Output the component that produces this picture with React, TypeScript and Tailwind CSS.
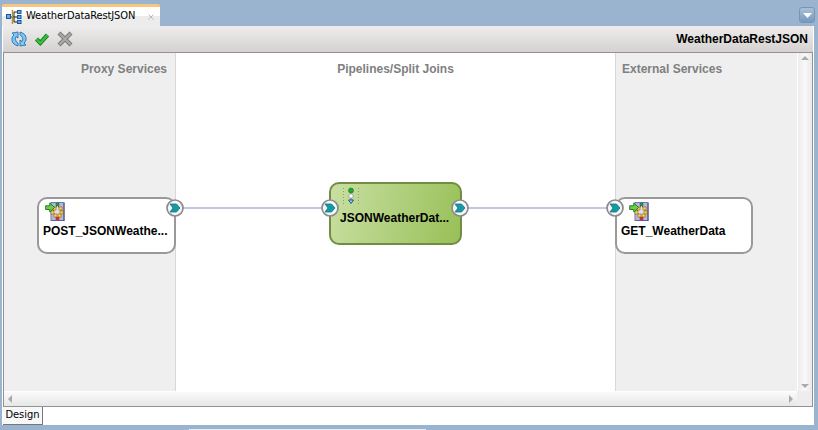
import React from "react";

function Port({ className }: { className: string }) {
  return (
    <svg className={`absolute size-[18px] ${className}`} viewBox="0 0 18 18">
      <circle cx="9" cy="9" r="8" fill="#f6f8f8" stroke="#8b8b8b" strokeWidth="1.7" />
      <path d="M4 5H10.5L14 9L10.5 13H4L7 9Z" fill="#159aa5" stroke="#17757f" strokeWidth="0.8" />
    </svg>
  );
}

function ServiceIcon() {
  return (
    <svg className="block h-5 w-5" viewBox="0 0 20 20">
      <rect x="6" y="1.5" width="13" height="18" fill="#b7b7de" stroke="#7777ad" />
      <path d="M19 2V20H6" fill="none" stroke="#4a4a78" strokeWidth="1" />
      <path d="M12.5 4L7.5 11L12.5 17L17 11Z" fill="#ddddf3" stroke="#6b4a3a" strokeWidth="1" />
      <rect x="11" y="2" width="3" height="2.5" fill="#21a052" stroke="#12713a" strokeWidth=".6" />
      <rect x="11" y="16" width="3" height="2.5" fill="#d5333e" stroke="#a2152a" strokeWidth=".6" />
      <g fill="#ffdb52" stroke="#9b7418" strokeWidth=".7">
        <rect x="8" y="6" width="3" height="3" /><rect x="14" y="6" width="3" height="3" />
        <rect x="6" y="10" width="3" height="3" /><rect x="15" y="10" width="3" height="3" />
        <rect x="9" y="13" width="3" height="3" /><rect x="13" y="13" width="3" height="3" />
      </g>
      <path d="M.7 4.8H4.8V2L9.6 6.5L4.8 11V8.5H.7Z" fill="#6ccf4b" stroke="#247e24" />
    </svg>
  );
}

function TabIcon() {
  return (
    <svg className="h-4 w-4 shrink-0" viewBox="0 0 16 16">
      <path d="M4 8H13M8 3H12M8 13H12M8 3V13" stroke="#222" strokeWidth="1" fill="none" />
      <path d="M6.5 1V15" stroke="#b19225" strokeWidth="1.5" />
      <g fill="#69a9ec" stroke="#17569d">
        <rect x=".5" y="5.5" width="4" height="4" />
        <rect x="11.5" y="1.5" width="3.5" height="3" />
        <rect x="11.5" y="6.5" width="3.5" height="3" />
        <rect x="11.5" y="11.5" width="3.5" height="3" />
      </g>
    </svg>
  );
}

export default function App() {
  return (
    <div className="flex h-[430px] w-[818px] flex-col overflow-hidden bg-[#9ab4d0] pl-[2px] font-['Liberation_Sans',Arial,sans-serif] text-black">
      <header className="flex h-[26px] shrink-0 items-end justify-between pr-[3px]">
        <div className="flex h-[22px] w-[158px] items-center rounded-t-[2px] border-t-[3px] border-[#f5c77c] bg-linear-to-b from-white from-50% to-[#ececec] to-50% pl-1">
          <TabIcon />
          <span className="ml-1 w-[114px] whitespace-nowrap font-['DejaVu_Sans_Condensed','DejaVu_Sans',sans-serif] text-[11px] tracking-[-0.1px]">WeatherDataRestJSON</span>
          <svg className="ml-[8px] size-[6px]" viewBox="0 0 6 6"><path d="M.5 .5L5.5 5.5M5.5 .5L.5 5.5" stroke="#b9b9b9" /></svg>
        </div>
        <button className="mb-[3px] flex size-4 items-center justify-center rounded-[3px] border border-[#7795b9] bg-linear-to-b from-[#a9c0d8] to-[#7898bb]" aria-label="Tab list">
          <svg className="h-[5px] w-[9px]" viewBox="0 0 9 5"><path d="M0 0H9L4.5 5Z" fill="white" /></svg>
        </button>
      </header>
      <main className="flex h-[399px] w-[812px] shrink-0 flex-col bg-white pl-px pr-px">
        <div className="flex h-[26px] shrink-0 items-center bg-linear-to-b from-[#eeecec] to-[#d5d1d1] pl-2 pr-[5px]">
          <svg className="h-4 w-[16px]" viewBox="0 0 16 16">
            <g fill="#80c8f1" stroke="#2470b6" strokeWidth=".9" strokeLinejoin="round">
              <path d="M1 2L7 1V7L5 5.5Q3 8 5.5 11L7 12V15Q0 13 1 7Q1.5 5 3 4Z" />
              <path d="M15 14L9 15V9L11 10.5Q13 8 10.5 5L9 4V1Q16 3 15 9Q14.5 11 13 12Z" />
            </g>
          </svg>
          <svg className="ml-[7px] h-4 w-4" viewBox="0 0 16 16"><path d="M2.5 8L6.3 12L13.5 4" fill="none" stroke="#187a22" strokeWidth="4.2" /><path d="M2.5 8L6.3 12L13.5 4" fill="none" stroke="#34c638" strokeWidth="2.3" /></svg>
          <svg className="ml-[7px] h-4 w-4" viewBox="0 0 16 16"><path d="M2 2L14 14M14 2L2 14" stroke="#777" strokeWidth="4.2" /><path d="M2.5 2.5L13.5 13.5M13.5 2.5L2.5 13.5" stroke="#aaa" strokeWidth="2.2" /></svg>
          <h1 className="ml-auto text-[12px] font-bold">WeatherDataRestJSON</h1>
        </div>
        <section className="flex h-[355px] w-[810px] shrink-0 flex-col border border-[#929292]">
          <div className="flex h-[338px]">
            <div className="relative flex w-[793px] text-[12px] font-bold text-[#808080]">
              <div className="w-[172px] border-r border-[#d8d8d8] bg-[#efefef] pr-[8px] pt-[7px] text-right">Proxy Services</div>
              <div className="w-[440px] border-r border-[#d8d8d8] bg-white pt-[7px] text-center">Pipelines/Split Joins</div>
              <div className="flex-1 bg-[#efefef] pl-[6px] pt-[7px]">External Services</div>
              <div className="absolute left-[171px] top-[154px] h-[2px] w-[441px] bg-[#c5c5e8]" />
              <div className="absolute left-[33px] top-[144px] h-[57px] w-[139px] rounded-[10px] border-2 border-[#999] bg-white text-black">
                <div className="ml-[6px] mt-[2px]"><ServiceIcon /></div>
                <div className="ml-[4px] mt-px whitespace-nowrap">POST_JSONWeathe...</div>
              </div>
              <div className="absolute left-[325px] top-[129px] h-[63px] w-[133px] rounded-[10px] border-2 border-[#718c43] bg-linear-105 from-[#c9dfa1] to-[#98c056] text-black">
                <svg className="ml-[11px] mt-[3px] h-[18px] w-[18px]" viewBox="0 0 18 18">
                  <path d="M1.5 1V17M16.5 1V17" stroke="#8f9d72" strokeDasharray="1 2" />
                  <path d="M9 3V15" stroke="#59715a" />
                  <circle cx="9" cy="3.5" r="2.5" fill="#25a52b" stroke="#207725" strokeWidth=".6" />
                  <circle cx="9" cy="9" r="2.2" fill="white" stroke="#8795a2" strokeWidth=".7" />
                  <path d="M6.5 13H11.5L9 16.5Z" fill="#a1d1ff" stroke="#205598" />
                </svg>
                <div className="ml-[9px] mt-[4px] whitespace-nowrap">JSONWeatherDat...</div>
              </div>
              <div className="absolute left-[611px] top-[144px] h-[57px] w-[138px] rounded-[10px] border-2 border-[#999] bg-white text-black">
                <div className="ml-[12px] mt-[2px]"><ServiceIcon /></div>
                <div className="ml-[4px] mt-px whitespace-nowrap">GET_WeatherData</div>
              </div>
              <Port className="left-[162px] top-[146px]" />
              <Port className="left-[317px] top-[146px]" />
              <Port className="left-[447px] top-[146px]" />
              <Port className="left-[602px] top-[146px]" />
            </div>
            <div className="flex flex-1 flex-col items-center justify-between border-l border-white bg-linear-to-r from-[#ededed] via-[#f8f8f8] to-[#e9e9e9] py-[3px]">
              <svg className="h-1 w-2" viewBox="0 0 8 4"><path d="M4 0L8 4H0Z" fill="#aaa" /></svg>
              <svg className="h-1 w-2" viewBox="0 0 8 4"><path d="M0 0H8L4 4Z" fill="#aaa" /></svg>
            </div>
          </div>
          <div className="flex flex-1 bg-[#ededed]">
            <div className="flex w-[793px] items-center justify-between border-t border-white bg-linear-to-b from-[#fafafa] to-[#e7e7e7] px-1">
              <svg className="h-2 w-1" viewBox="0 0 4 8"><path d="M4 0V8L0 4Z" fill="#aaa" /></svg>
              <svg className="h-2 w-1" viewBox="0 0 4 8"><path d="M0 0L4 4L0 8Z" fill="#aaa" /></svg>
            </div>
          </div>
        </section>
        <div className="flex h-[18px]">
          <div className="flex w-[40px] items-center justify-center border-b border-r border-[#777] bg-[#f8f8f8] font-['DejaVu_Sans_Condensed','DejaVu_Sans',sans-serif] text-[11px]">Design</div>
        </div>
      </main>
      <div className="mt-[4px] ml-[187px] h-px w-[237px] bg-[#e6edf4]" />
    </div>
  );
}
